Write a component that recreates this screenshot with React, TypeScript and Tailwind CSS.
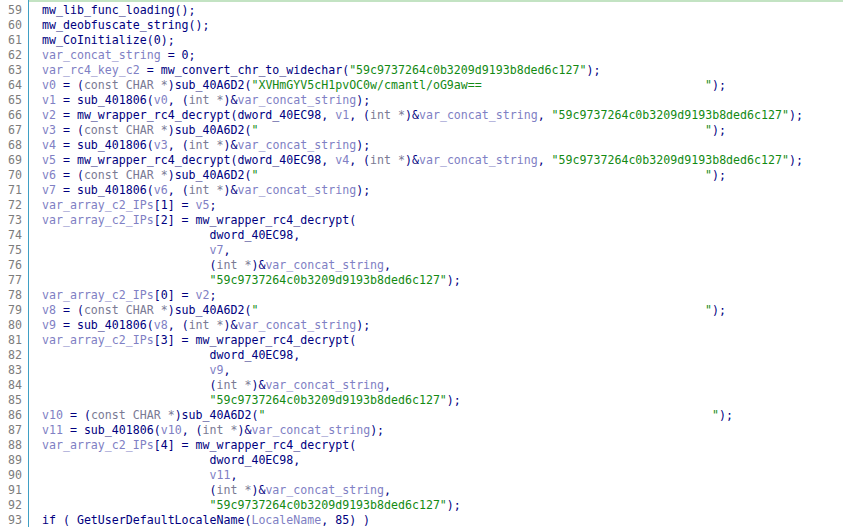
type Seg = [string, 'n' | 'v' | 's' | 't']

const KEY = '"59c9737264c0b3209d9193b8ded6c127"'
const IND = ' '.repeat(24)
const BLANK = '"' + ' '.repeat(64) + '"'

const colors: Record<Seg[1], string> = {
  n: 'text-[#000080]',
  v: 'text-[#8080c4]',
  s: 'text-[#138a13]',
  t: 'text-[#7a7a94]',
}

const cast = (name: string, str: string): Seg[] => [
  [name, 'v'],
  [' = (', 'n'],
  ['const CHAR *', 't'],
  [')sub_40A6D2(', 'n'],
  [str, 's'],
  [');', 'n'],
]

const concat = (name: string, arg: string): Seg[] => [
  [name, 'v'],
  [' = sub_401806(', 'n'],
  [arg, 'v'],
  [', (', 'n'],
  ['int *', 't'],
  [')&', 'n'],
  ['var_concat_string', 'v'],
  [');', 'n'],
]

const decrypt = (name: string, arg: string): Seg[] => [
  [name, 'v'],
  [' = mw_wrapper_rc4_decrypt(dword_40EC98, ', 'n'],
  [arg, 'v'],
  [', (', 'n'],
  ['int *', 't'],
  [')&', 'n'],
  ['var_concat_string', 'v'],
  [', ', 'n'],
  [KEY, 's'],
  [');', 'n'],
]

const multi = (idx: number, arg: string): Seg[][] => [
  [
    ['var_array_c2_IPs', 'v'],
    [`[${idx}] = mw_wrapper_rc4_decrypt(`, 'n'],
  ],
  [[IND + 'dword_40EC98,', 'n']],
  [
    [IND, 'n'],
    [arg, 'v'],
    [',', 'n'],
  ],
  [
    [IND + '(', 'n'],
    ['int *', 't'],
    [')&', 'n'],
    ['var_concat_string', 'v'],
    [',', 'n'],
  ],
  [
    [IND, 'n'],
    [KEY, 's'],
    [');', 'n'],
  ],
]

const lines: Seg[][] = [
  [['mw_lib_func_loading();', 'n']],
  [['mw_deobfuscate_string();', 'n']],
  [['mw_CoInitialize(0);', 'n']],
  [
    ['var_concat_string', 'v'],
    [' = 0;', 'n'],
  ],
  [
    ['var_rc4_key_c2', 'v'],
    [' = mw_convert_chr_to_widechar(', 'n'],
    [KEY, 's'],
    [');', 'n'],
  ],
  cast('v0', '"XVHmGYV5cH1pvOC0w/cmantl/oG9aw==' + ' '.repeat(32) + '"'),
  concat('v1', 'v0'),
  decrypt('v2', 'v1'),
  cast('v3', BLANK),
  concat('v4', 'v3'),
  decrypt('v5', 'v4'),
  cast('v6', BLANK),
  concat('v7', 'v6'),
  [
    ['var_array_c2_IPs', 'v'],
    ['[1] = ', 'n'],
    ['v5', 'v'],
    [';', 'n'],
  ],
  ...multi(2, 'v7'),
  [
    ['var_array_c2_IPs', 'v'],
    ['[0] = ', 'n'],
    ['v2', 'v'],
    [';', 'n'],
  ],
  cast('v8', BLANK),
  concat('v9', 'v8'),
  ...multi(3, 'v9'),
  cast('v10', BLANK),
  concat('v11', 'v10'),
  ...multi(4, 'v11'),
  [
    ['if ( GetUserDefaultLocaleName(', 'n'],
    ['LocaleName', 'v'],
    [', 85) )', 'n'],
  ],
]

export default function App() {
  return (
    <div
      className="flex h-[527px] w-[843px] overflow-hidden bg-white text-[11.6px] leading-[15px]"
      style={{ fontFamily: '"DejaVu Sans Mono", "Liberation Mono", monospace' }}
    >
      {/* line numbers */}
      <div className="w-[29px] shrink-0 border-r border-[#3f9fc4] pt-[3px] pr-[6px] text-right text-[#7c7c7c]">
        {lines.map((_, i) => (
          <div key={i} className="h-[15px]">
            {59 + i}
          </div>
        ))}
      </div>

      {/* pseudocode */}
      <div className="flex-1 border-t-2 border-[#c3e3c3] pt-px pl-[13px]">
        {lines.map((segs, i) => (
          <div key={i} className="h-[15px] whitespace-pre">
            {segs.map(([text, kind], j) => (
              <span key={j} className={colors[kind]}>
                {text}
              </span>
            ))}
          </div>
        ))}
      </div>
    </div>
  )
}
